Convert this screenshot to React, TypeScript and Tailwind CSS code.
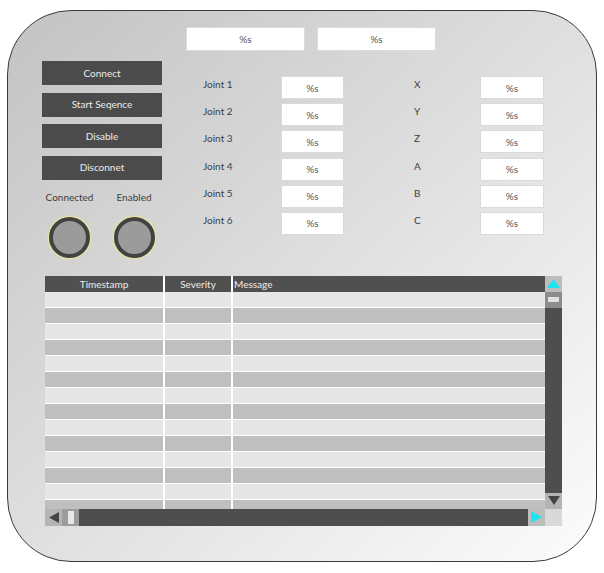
import React from "react";

const joints = ["Joint 1", "Joint 2", "Joint 3", "Joint 4", "Joint 5", "Joint 6"];
const axes = ["X", "Y", "Z", "A", "B", "C"];
const buttons = ["Connect", "Start Seqence", "Disable", "Disconnet"];

function ValueBox({ w }: { w: string }) {
  return (
    <div
      className={`${w} h-[23px] bg-white border border-[#dadada] flex items-center justify-center text-[10px] text-[#555] leading-none`}
    >
      %s
    </div>
  );
}

function Indicator({ label }: { label: string }) {
  return (
    <div className="flex flex-col items-center">
      <div className="text-[10px] leading-[15px] text-[#3e3e3e] whitespace-nowrap">{label}</div>
      <div className="mt-[12px] w-[41px] h-[41px] rounded-full border-[4px] border-[#424242] bg-[#9b9b9b] shadow-[0_0_1px_1.5px_#e4e2a2]" />
    </div>
  );
}

function Row({ dark }: { dark: boolean }) {
  const bg = dark ? "bg-[#bfbfbf]" : "bg-[#e6e6e6]";
  return (
    <div className="flex h-[16px] shrink-0 border-b border-white">
      <div className={`w-[120px] ${bg} border-r-2 border-white`} />
      <div className={`w-[68px] ${bg} border-r-2 border-white`} />
      <div className={`flex-1 ${bg}`} />
    </div>
  );
}

export default function App() {
  const rows = Array.from({ length: 14 }, (_, i) => i % 2 === 1);
  return (
    <div className="w-[604px] h-[573px] bg-white pt-[10px] pl-[7px] font-[Lato,sans-serif]">
      <div className="w-[590px] h-[552px] rounded-[64px] border border-[#3a3a3a] bg-gradient-to-br from-[#c3c3c3] to-[#fcfcfc] flex flex-col">
        {/* top boxes */}
        <div className="flex gap-[12px] ml-[178px] mt-[16px]">
          <div className="w-[119px] h-[24px] bg-white border border-[#dcdcdc] flex items-center justify-center text-[10px] text-[#555]">%s</div>
          <div className="w-[119px] h-[24px] bg-white border border-[#dcdcdc] flex items-center justify-center text-[10px] text-[#555]">%s</div>
        </div>

        {/* main row */}
        <div className="flex mt-[10px]">
          <div className="ml-[34px] w-[120px] flex flex-col">
            <div className="flex flex-col gap-[7.6px]">
              {buttons.map((b) => (
                <div
                  key={b}
                  className="h-[24px] bg-[#4b4b4b] text-[#ececec] text-[10px] flex items-center justify-center"
                >
                  {b}
                </div>
              ))}
            </div>
            <div className="flex mt-[10px]">
              <div className="w-[55px] flex justify-center">
                <Indicator label="Connected" />
              </div>
              <div className="w-[56px] ml-[9px] flex justify-center">
                <Indicator label="Enabled" />
              </div>
            </div>
          </div>

          <div className="ml-[41px] mt-[15px] flex flex-col">
            {joints.map((j, i) => (
              <div key={j} className="flex h-[27.2px]">
                <div className="w-[78px] pt-[1px] text-[10px] leading-[15px] text-[#3e3e3e]">{j}</div>
                <ValueBox w="w-[63px]" />
                <div className="ml-[70px] w-[66px] pt-[1px] text-[10px] leading-[15px] text-[#3e3e3e]">{axes[i]}</div>
                <ValueBox w="w-[64px]" />
              </div>
            ))}
          </div>
        </div>

        {/* log table */}
        <div className="ml-[37px] mt-[18px] w-[517px] h-[250px] grid grid-cols-[500px_17px] grid-rows-[233px_17px]">
          <div className="flex flex-col overflow-hidden">
            <div className="flex h-[16px] shrink-0 bg-[#505050] text-[10px] text-[#ececec] leading-[16px]">
              <div className="w-[120px] text-center border-r-2 border-white">Timestamp</div>
              <div className="w-[68px] text-center border-r-2 border-white">Severity</div>
              <div className="flex-1 pl-[1px]">Message</div>
            </div>
            {rows.map((d, i) => (
              <Row key={i} dark={d} />
            ))}
          </div>

          {/* vertical scrollbar */}
          <div className="flex flex-col bg-[#4e4e4e]">
            <div className="h-[16px] bg-[#bdbdbd] flex items-center justify-center">
              <svg width="13" height="9" viewBox="0 0 13 9">
                <polygon points="6.5,0 13,9 0,9" fill="#1ee3f0" />
              </svg>
            </div>
            <div className="h-[16px] bg-[#8c8c8c] flex items-center justify-center">
              <div className="w-[11px] h-[5px] bg-[#e2e2e2]" />
            </div>
            <div className="flex-1" />
            <div className="h-[16px] bg-[#b4b4b4] flex items-center justify-center">
              <svg width="12" height="9" viewBox="0 0 12 9">
                <polygon points="0,0 12,0 6,9" fill="#444" />
              </svg>
            </div>
          </div>

          {/* horizontal scrollbar */}
          <div className="flex bg-[#4e4e4e]">
            <div className="w-[17px] bg-[#b5b5b5] flex items-center justify-center">
              <svg width="10" height="11" viewBox="0 0 10 11">
                <polygon points="0,5.5 10,0 10,11" fill="#444" />
              </svg>
            </div>
            <div className="w-[17px] bg-[#9c9c9c] flex items-center justify-center">
              <div className="w-[6px] h-[13px] bg-[#e8e8e8]" />
            </div>
            <div className="flex-1" />
            <div className="w-[17px] bg-[#bdbdbd] flex items-center justify-center">
              <svg width="11" height="12" viewBox="0 0 11 12">
                <polygon points="0,0 11,6 0,12" fill="#1ee3f0" />
              </svg>
            </div>
          </div>
          <div className="bg-[#d9d9d9]" />
        </div>
      </div>
    </div>
  );
}
